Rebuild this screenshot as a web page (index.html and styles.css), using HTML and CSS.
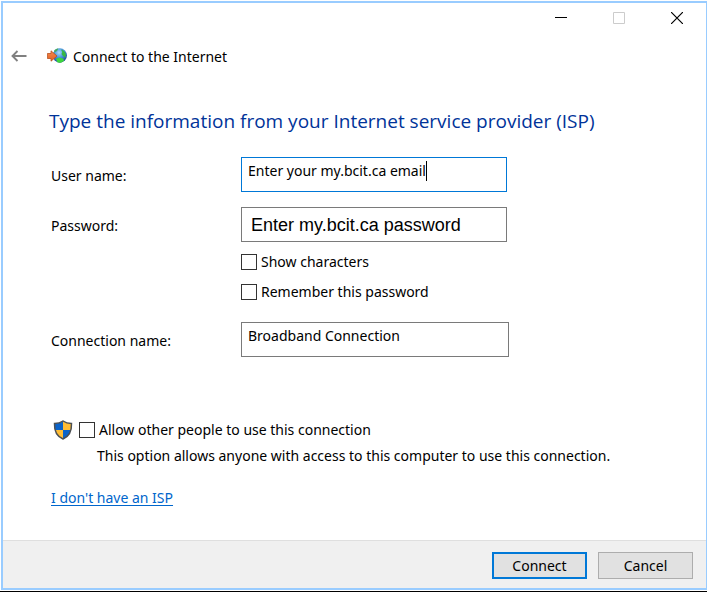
FILE: index.html
```
<!DOCTYPE html>
<html lang="en">
<head>
<meta charset="utf-8">
<meta name="viewport" content="width=device-width, initial-scale=1">
<title>Connect to the Internet</title>
<link rel="stylesheet" href="styles.css">
</head>
<body>
<main class="window">
  <div class="titlebar">
    <button class="caption" type="button" aria-label="Minimize">
      <svg width="12" height="12" viewBox="0 0 12 12"><path d="M0 5.5h12" stroke="#000"/></svg>
    </button>
    <button class="caption" type="button" aria-label="Maximize" disabled>
      <svg width="12" height="12" viewBox="0 0 12 12"><path d="M.5.5h11v11H.5z" fill="none" stroke="#ccc"/></svg>
    </button>
    <button class="caption" type="button" aria-label="Close">
      <svg width="12" height="12" viewBox="0 0 12 12"><path d="M0 0l12 12M12 0L0 12" stroke="#000" stroke-width="1.2"/></svg>
    </button>
  </div>

  <header class="header">
    <button class="back" type="button" aria-label="Back">
      <svg width="16" height="14" viewBox="0 0 16 14"><path d="M15.5 6H1.5M6.500 1L1.500 6l5 5" fill="none" stroke="#808080" stroke-width="1.9"/></svg>
    </button>
    <svg class="globe" width="20" height="18" viewBox="0 0 20 18" aria-hidden="true">
      <defs>
        <radialGradient id="sea" cx=".45" cy=".3" r=".75">
          <stop offset="0" stop-color="#a8dcfa"/>
          <stop offset=".45" stop-color="#4794dc"/>
          <stop offset="1" stop-color="#163c86"/>
        </radialGradient>
        <linearGradient id="arrow" x2="0" y2="1">
          <stop offset="0" stop-color="#f58a50"/>
          <stop offset="1" stop-color="#e2601f"/>
        </linearGradient>
      </defs>
      <circle cx="12.800" cy="7.500" r="7.200" fill="url(#sea)"/>
      <path d="M14 1.500c2.500.5 4.500 2.500 5 5.500l-1 2.500-2-1.500-1.500-2 .8-2z" fill="#35b844"/>
      <path d="M9 11l3.500-1.500 4 1.200.5 2-3 2-3.500-.3z" fill="#3ed63c"/>
      <path d="M7 2.800C8.500 1 10 .6 11.500.6L10 3 7.500 4.500z" fill="#45a864"/>
      <path d="M.4 5.500H4V2.800L10 8l-6 5.200v-2.700H.4z" fill="url(#arrow)" stroke="#b5501f" stroke-width=".8"/>
    </svg>
    <span>Connect to the Internet</span>
  </header>

  <form class="content">
    <h1>Type the information from your Internet service provider (ISP)</h1>

    <div class="row">
      <label for="user">User name:</label>
      <div class="field focused">
        <input id="user" type="text" value="Enter your my.bcit.ca email">
        <span class="caret"></span>
      </div>
    </div>
    <div class="row">
      <label for="pass">Password:</label>
      <div class="field password">
        <input id="pass" type="text" value="Enter my.bcit.ca password">
      </div>
    </div>
    <div class="options">
      <label class="check"><input type="checkbox">Show characters</label>
      <label class="check"><input type="checkbox">Remember this password</label>
    </div>
    <div class="row">
      <label for="conn">Connection name:</label>
      <div class="field wide">
        <input id="conn" type="text" value="Broadband Connection">
      </div>
    </div>

    <div class="sharing">
      <svg width="20" height="20" viewBox="0 0 20 20" aria-hidden="true">
        <defs>
          <clipPath id="shield"><path d="M10 1C7.500 2.800 4.500 3.500 1.500 3.500 1.200 11 4 16.500 10 19c6-2.500 8.800-8 8.500-15.500C15.500 3.500 12.500 2.800 10 1z"/></clipPath>
        </defs>
        <g clip-path="url(#shield)">
          <path d="M0 0h10v10H0zM10 10h10v10H10z" fill="#0a63c9"/>
          <path d="M10 0h10v10H10zM0 10h10v10H0z" fill="#ffbd35"/>
        </g>
        <path d="M10 1C7.500 2.800 4.500 3.500 1.500 3.500 1.200 11 4 16.500 10 19c6-2.500 8.800-8 8.500-15.500C15.500 3.500 12.500 2.800 10 1z" fill="none" stroke="#4c5054" stroke-width="1.5"/>
      </svg>
      <label class="check"><input type="checkbox" aria-describedby="note">Allow other people to use this connection</label>
    </div>
    <p id="note" class="note">This option allows anyone with access to this computer to use this connection.</p>
    <a class="link" href="#">I don't have an ISP</a>
  </form>

  <footer class="footer">
    <button class="button primary" type="button">Connect</button>
    <button class="button" type="button">Cancel</button>
  </footer>
</main>
</body>
</html>
```
FILE: styles.css
```
* {
  box-sizing: border-box;
}

body {
  margin: 0;
  min-height: 100vh;
  padding: 1px 0 1px 1px;
  display: flex;
  border-bottom: 1px solid #000;
  background: #fff;
  color: #000;
  font-family: "Segoe UI", "Noto Sans", sans-serif;
  font-size: 14px;
  line-height: 20px;
}

button,
input {
  font: inherit;
  color: inherit;
}

svg {
  display: block;
  flex: none;
}

.window {
  flex: 1;
  min-width: 0;
  display: flex;
  flex-direction: column;
  border: 2px solid #99ccff;
  border-right-width: 1px;
}

.titlebar {
  display: flex;
  justify-content: flex-end;
}

.caption {
  width: 58px;
  height: 30px;
  padding: 0;
  display: grid;
  place-items: center;
  border: 0;
  background: none;
}

.header {
  display: flex;
  align-items: center;
  height: 48px;
  padding-left: 8px;
}

.back {
  padding: 0;
  border: 0;
  background: none;
}

.globe {
  margin: 0 6px 0 20px;
}

.content {
  flex: 1;
  padding: 26px 48px 0;
}

h1 {
  margin: 0 0 22px -2px;
  color: #003399;
  font-family: "Segoe UI", "Open Sans", sans-serif;
  font-size: 19px;
  font-weight: 400;
  line-height: 28px;
}

.row {
  display: grid;
  grid-template-columns: 190px 1fr;
  align-items: center;
  margin-bottom: 15px;
}

.row label {
  padding-top: 2px;
}

.field {
  position: relative;
  max-width: 266px;
}

.field.wide {
  max-width: 268px;
}

.field input {
  display: block;
  width: 100%;
  height: 35px;
  padding: 0 6px 8px;
  border: 1px solid #7a7a7a;
  border-radius: 0;
  outline: 0;
  background: #fff;
}

.field.focused input {
  border-color: #0078d7;
}

.field.password input {
  padding: 2px 9px 0;
  font-family: Helvetica, "Liberation Sans", Arial, sans-serif;
  font-size: 18px;
}

.caret {
  position: absolute;
  left: 185px;
  top: 4px;
  width: 1px;
  height: 20px;
  background: #000;
}

.options {
  display: grid;
  gap: 10px;
  justify-items: start;
  margin: -5px 0 20px 190px;
}

.check {
  display: flex;
  align-items: center;
  gap: 4px;
}

.check input {
  appearance: none;
  flex: none;
  width: 16px;
  height: 16px;
  margin: 0;
  border: 1px solid #333;
  background: #fff;
}

.sharing {
  display: flex;
  align-items: center;
  gap: 6px;
  margin-top: 63px;
  padding-left: 2px;
}

.note {
  margin: 6px 0 22px 46px;
}

.link {
  color: #0066cc;
  text-underline-offset: 2px;
}

.footer {
  display: flex;
  justify-content: flex-end;
  gap: 11px;
  padding: 11px 13px 9px;
  border-top: 1px solid #dfdfdf;
  background: #f0f0f0;
}

.button {
  width: 95px;
  height: 27px;
  padding: 0;
  border: 1px solid #adadad;
  background: #e1e1e1;
}

.button.primary {
  border: 2px solid #0078d7;
}
```
